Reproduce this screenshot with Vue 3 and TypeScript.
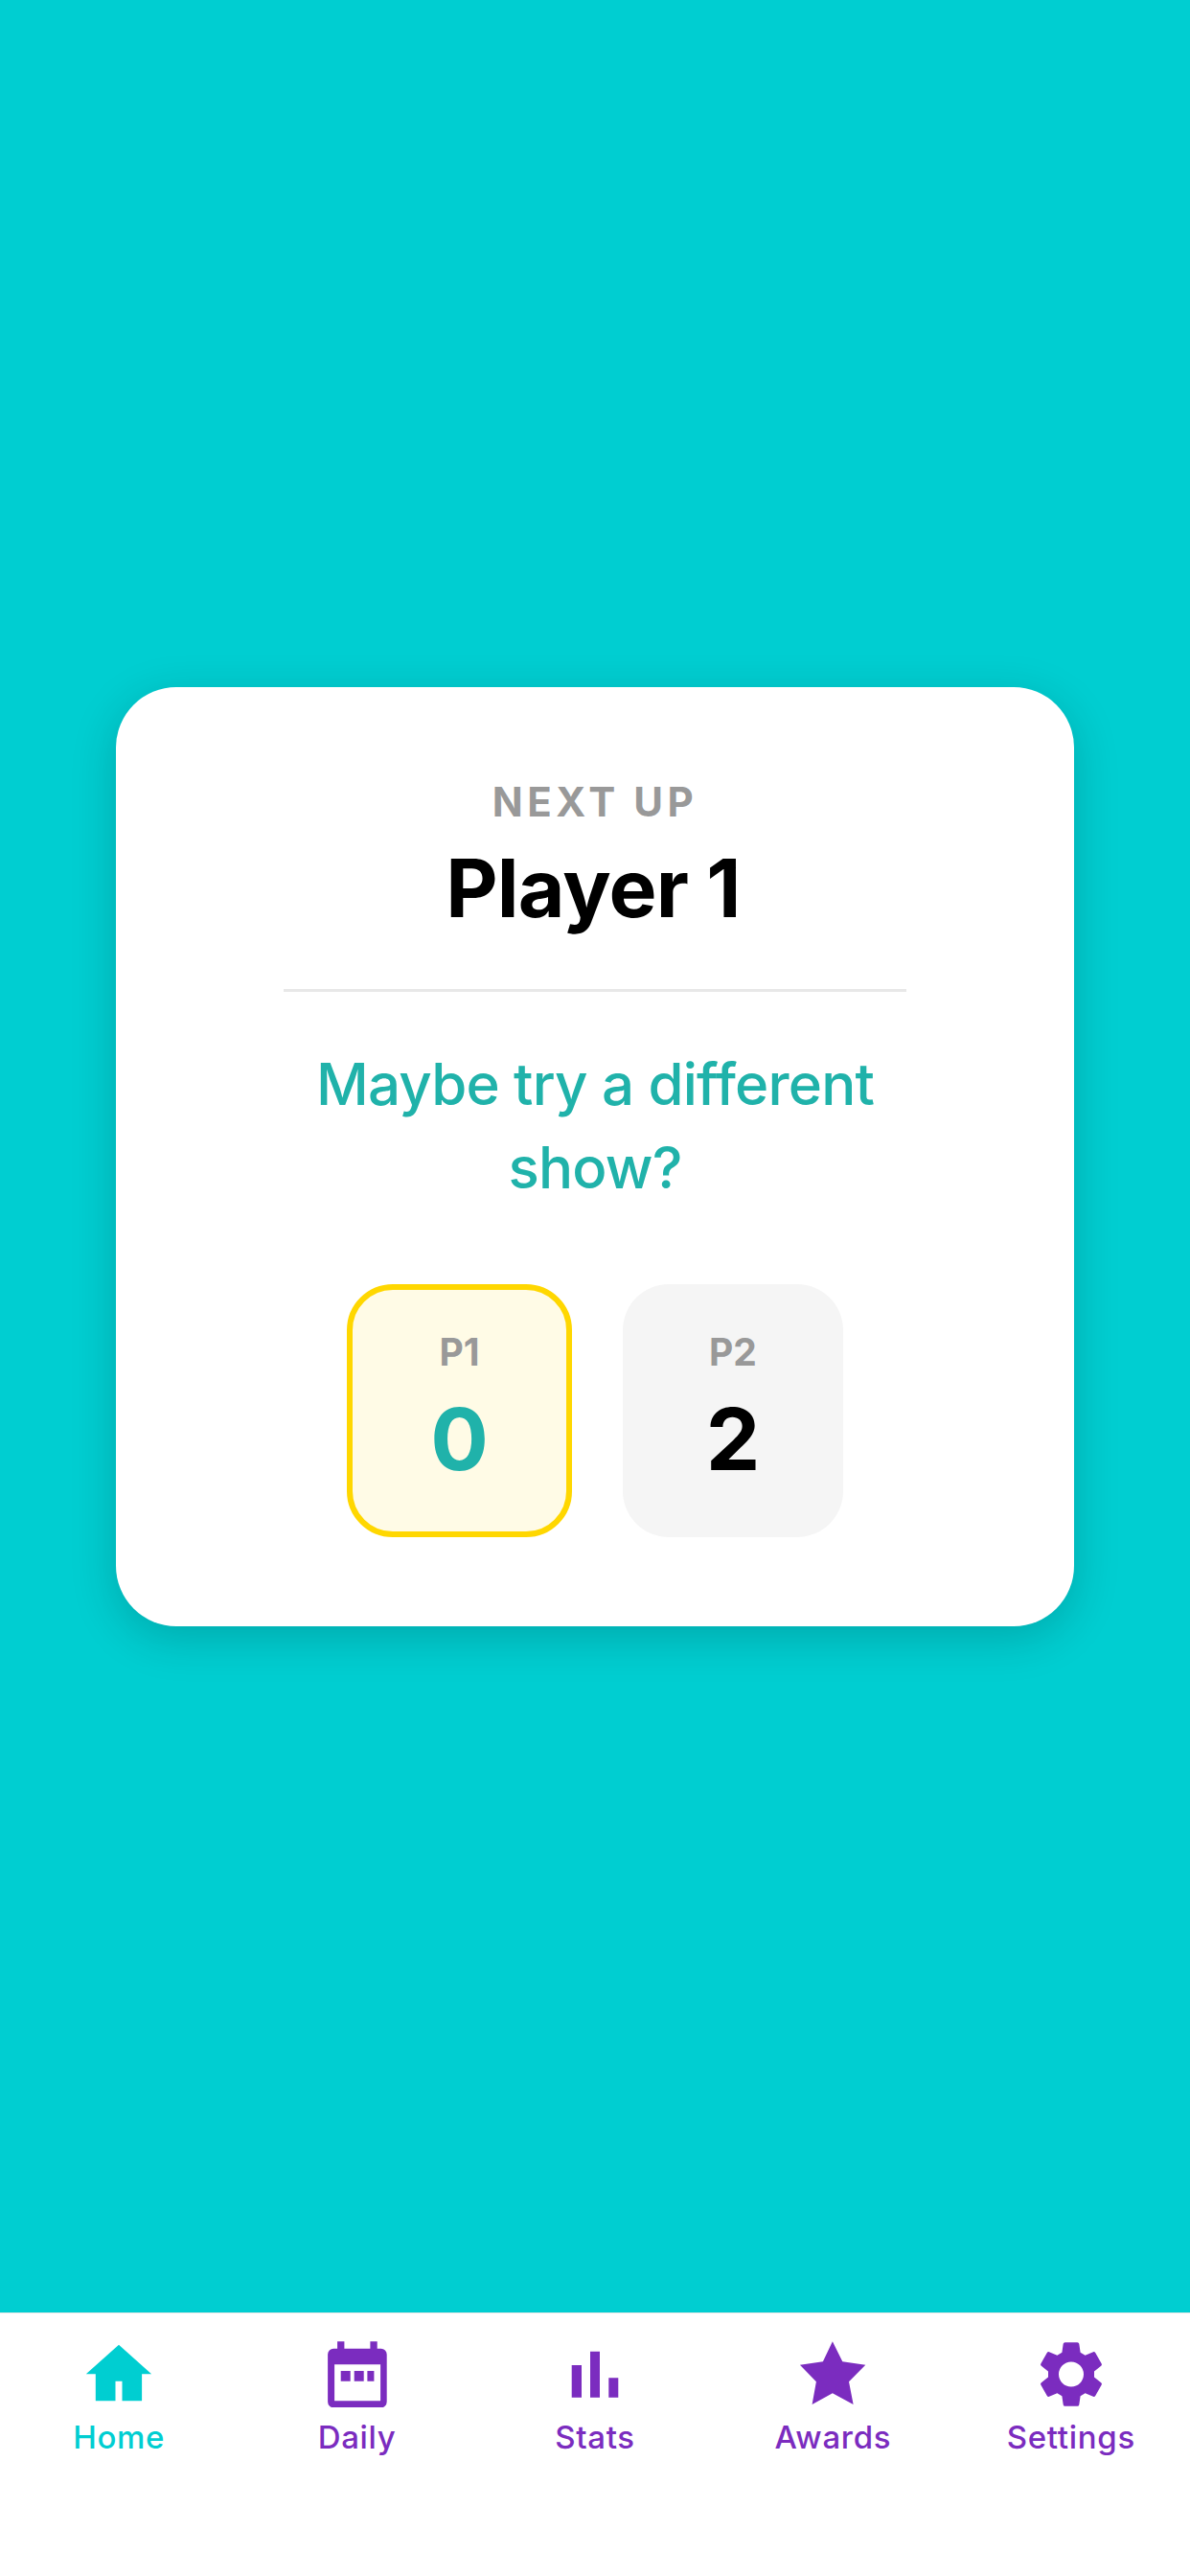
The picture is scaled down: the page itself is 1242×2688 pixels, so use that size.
<script setup lang="ts">
const scores = [
  { id: 'P1', value: 0, active: true },
  { id: 'P2', value: 2, active: false },
]
</script>

<template>
  <div class="screen">
    <main class="main">
      <section class="card">
        <div class="label">NEXT UP</div>
        <h1 class="player">Player 1</h1>
        <div class="divider"></div>
        <p class="message">Maybe try a different show?</p>
        <div class="scores">
          <div v-for="s in scores" :key="s.id" class="score" :class="{ active: s.active }">
            <div class="score-id">{{ s.id }}</div>
            <div class="score-value">{{ s.value }}</div>
          </div>
        </div>
      </section>
    </main>
    <nav class="tabs">
      <div class="tab current">
        <svg class="icon" viewBox="0 0 84 72"><path d="M42 6.7 76.1 37.3H66.1V65.3H45.5V44.7H38.5V65.3H17.8V37.3H7.8Z" /></svg>
        <span>Home</span>
      </div>
      <div class="tab">
        <svg class="icon" viewBox="0 0 84 72"><path fill-rule="evenodd" d="M21.1 3.3H28.4V10.7H55.4V3.3H62.7V10.7H66.7A6 6 0 0 1 72.7 16.7V66.3A6 6 0 0 1 66.7 72.3H17.1A6 6 0 0 1 11.1 66.3V16.7A6 6 0 0 1 17.1 10.7H21.1ZM18.1 27.3V65.3H66.1V27.3ZM24.7 34H34.7V44.7H24.7ZM38.7 34H48.7V44.7H38.7ZM52.4 34H59.4V44.7H52.4Z" /></svg>
        <span>Daily</span>
      </div>
      <div class="tab">
        <svg class="icon" viewBox="0 0 84 72"><path d="M17.7 28H28V61.7H17.7ZM37 13.7H47V61.7H37ZM56.3 41.3H66.3V61.7H56.3Z" /></svg>
        <span>Stats</span>
      </div>
      <div class="tab">
        <svg class="icon" viewBox="0 0 84 72"><path d="M41.9 3.3 52.3 24.3 76.3 27.7 59 45.3 63.6 69 41.9 57.3 20.6 69 24.9 45.3 7.9 27.7 31.9 24.3Z" /></svg>
        <span>Awards</span>
      </div>
      <div class="tab">
        <svg class="icon" viewBox="0 0 84 72"><path fill-rule="evenodd" d="M35.5 4.2H48.5Q50 4.2 50.3 5.7L51.6 14.8 56.6 17.7 65 14.2Q66.4 13.8 67.2 15L73.7 26.6Q74.4 27.9 73.2 28.8L66 34.4V40.6L73.2 46.2Q74.4 47.1 73.7 48.4L67.2 60Q66.4 61.2 65 60.8L56.6 57.3 51.6 60.2 50.3 69.3Q50 70.8 48.5 70.8H35.5Q34 70.8 33.7 69.3L32.4 60.2 27.4 57.3 19 60.8Q17.6 61.2 16.8 60L10.3 48.4Q9.6 47.1 10.8 46.2L18 40.6V34.4L10.8 28.8Q9.6 27.9 10.3 26.6L16.8 15Q17.6 13.8 19 14.2L27.4 17.7 32.4 14.8 33.7 5.7Q34 4.2 35.5 4.2ZM42 24.5A13 13 0 1 0 42 50.5 13 13 0 1 0 42 24.5Z" /></svg>
        <span>Settings</span>
      </div>
    </nav>
  </div>
</template>

<style scoped>
.screen {
  width: 1242px;
  height: 2688px;
  display: flex;
  flex-direction: column;
  background: #00ced1;
  font-family: Inter, "Liberation Sans", sans-serif;
}
.main {
  height: 2413px;
  display: flex;
  align-items: center;
  justify-content: center;
}
.card {
  width: 1000px;
  height: 980px;
  box-sizing: border-box;
  padding-top: 94px;
  display: flex;
  flex-direction: column;
  align-items: center;
  background: #fff;
  border-radius: 63px;
  box-shadow: 0 12px 48px rgba(0, 0, 0, 0.18);
}
.label {
  font-size: 42px;
  line-height: 51px;
  font-weight: 700;
  letter-spacing: 4.5px;
  color: #999;
}
.player {
  margin: 14px 4px 0 0;
  font-size: 84px;
  line-height: 102px;
  font-weight: 700;
  letter-spacing: -0.8px;
  color: #000;
}
.divider {
  width: 650px;
  height: 3px;
  margin-top: 54px;
  background: #e8e8e8;
}
.message {
  width: 700px;
  margin: 53px 0 0;
  font-size: 60px;
  line-height: 87px;
  font-weight: 500;
  letter-spacing: -0.8px;
  text-align: center;
  color: #20b2aa;
}
.scores {
  display: flex;
  gap: 53px;
  margin-top: 78px;
}
.score {
  width: 230px;
  height: 264px;
  box-sizing: border-box;
  padding-top: 47.5px;
  display: flex;
  flex-direction: column;
  align-items: center;
  border-radius: 48px;
  background: #f5f5f5;
}
.score.active {
  width: 235px;
  padding-top: 41.5px;
  border: 6px solid #ffd700;
  background: #fffbe6;
}
.score-id {
  font-size: 39px;
  line-height: 47px;
  font-weight: 700;
  color: #999;
}
.score-value {
  margin-top: 13px;
  font-size: 90px;
  line-height: 109px;
  font-weight: 700;
  color: #000;
}
.active .score-value {
  color: #20b2aa;
}
.tabs {
  flex: 1;
  box-sizing: border-box;
  padding-top: 26px;
  display: grid;
  grid-template-columns: repeat(5, 1fr);
  align-items: start;
  border-top: 1px solid #e8e8e8;
  background: #fff;
}
.tab {
  display: flex;
  flex-direction: column;
  align-items: center;
  gap: 11px;
  font-size: 33px;
  line-height: 40px;
  font-weight: 500;
  letter-spacing: 0.7px;
  color: #7b2cbf;
}
.tab.current {
  color: #00ced1;
}
.icon {
  width: 84px;
  height: 72px;
  fill: currentColor;
}
</style>
